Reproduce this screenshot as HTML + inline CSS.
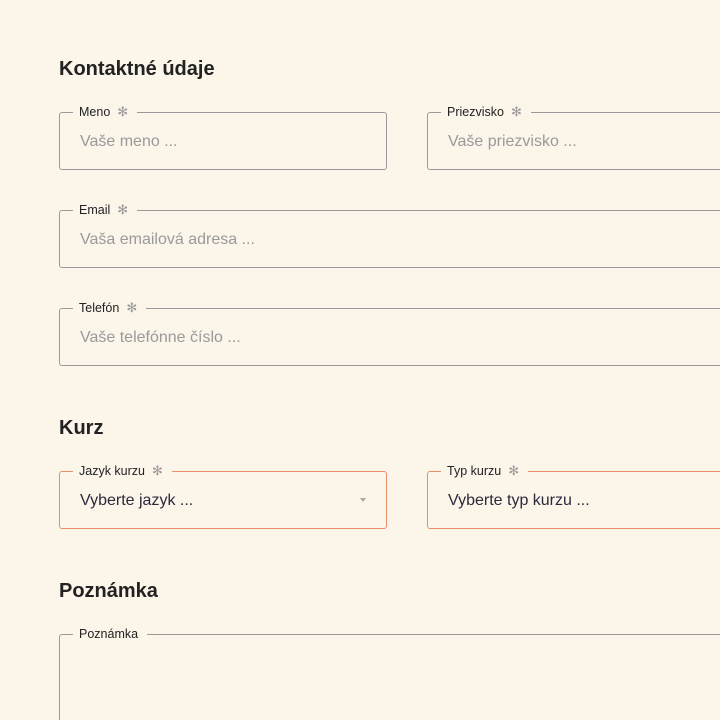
<!DOCTYPE html>
<html><head><meta charset="utf-8"><style>
html,body{margin:0;padding:0;background:#fcf5ea;width:720px;height:720px;overflow:hidden;font-family:"Liberation Sans","DejaVu Sans",sans-serif;}
body{position:relative;}
.h{position:absolute;left:59px;font-weight:bold;font-size:20px;color:#222;margin:0;}
.box{position:absolute;box-sizing:border-box;border:1px solid #9a9a9a;border-radius:3px;}
.box.o{border-color:#e8906a;}
.lab{position:absolute;left:13px;top:-9px;background:#fcf5ea;padding:0 9px 0 6px;font-size:12.5px;color:#222;line-height:16px;white-space:nowrap;}
.lab .s{color:#999;margin-left:7px;font-size:13px;}
.ph{position:absolute;left:20px;font-size:16px;color:#9a9a9a;white-space:nowrap;}
.val{position:absolute;left:20px;font-size:16px;color:#2a2a3a;white-space:nowrap;}
.arr{position:absolute;right:20px;top:26px;width:0;height:0;border-left:3.5px solid transparent;border-right:3.5px solid transparent;border-top:4px solid #aaa;}
</style></head><body>
<div class="h" style="top:58px">Kontaktné údaje</div>
<div class="box" style="left:59px;top:112px;width:328px;height:58px"><div class="lab">Meno<span class="s">✻</span></div><div class="ph" style="top:20px">Vaše meno ...</div></div>
<div class="box" style="left:427px;top:112px;width:310px;height:58px"><div class="lab">Priezvisko<span class="s">✻</span></div><div class="ph" style="top:20px">Vaše priezvisko ...</div></div>
<div class="box" style="left:59px;top:210px;width:680px;height:58px"><div class="lab">Email<span class="s">✻</span></div><div class="ph" style="top:20px">Vaša emailová adresa ...</div></div>
<div class="box" style="left:59px;top:308px;width:680px;height:58px"><div class="lab">Telefón<span class="s">✻</span></div><div class="ph" style="top:20px">Vaše telefónne číslo ...</div></div>
<div class="h" style="top:417px">Kurz</div>
<div class="box o" style="left:59px;top:471px;width:328px;height:58px"><div class="lab">Jazyk kurzu<span class="s">✻</span></div><div class="val" style="top:20px">Vyberte jazyk ...</div><div class="arr"></div></div>
<div class="box o" style="left:427px;top:471px;width:310px;height:58px"><div class="lab">Typ kurzu<span class="s">✻</span></div><div class="val" style="top:20px">Vyberte typ kurzu ...</div></div>
<div class="h" style="top:580px">Poznámka</div>
<div class="box" style="left:59px;top:634px;width:680px;height:96px"><div class="lab">Poznámka</div></div>
</body></html>
